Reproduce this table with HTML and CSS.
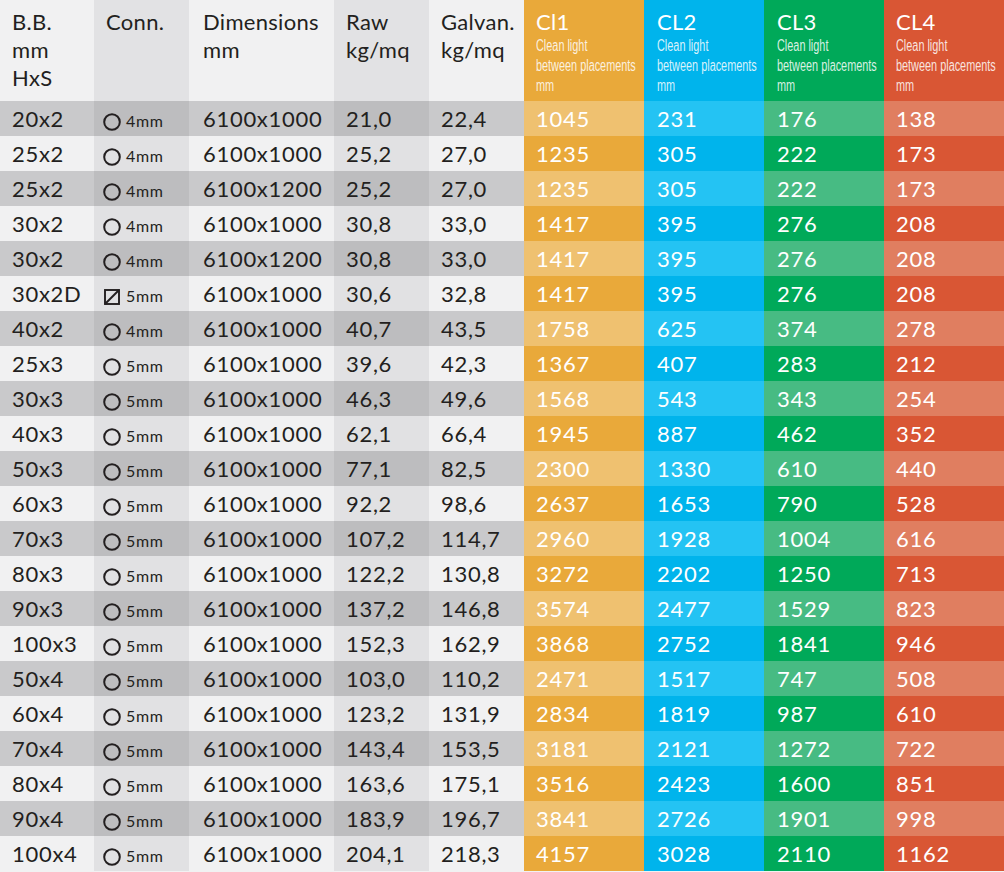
FILE: index.html
```html
<!DOCTYPE html>
<html lang="en">
<head>
<meta charset="utf-8">
<title>Grating table</title>
<link rel="stylesheet" href="styles.css">
</head>
<body>
<table class="grid">
  <colgroup>
    <col class="w-bb"><col class="w-conn"><col class="w-dim"><col class="w-raw"><col class="w-gal">
    <col class="w-cl"><col class="w-cl"><col class="w-cl"><col class="w-cl">
  </colgroup>
  <thead>
    <tr class="head">
      <th class="c-a">B.B.<br>mm<br>HxS</th>
      <th class="c-b">Conn.</th>
      <th class="c-a dim">Dimensions<br>mm</th>
      <th class="c-b">Raw<br>kg/mq</th>
      <th class="c-a">Galvan.<br>kg/mq</th>
      <th class="cl cl1"><span class="cl-title">Cl1</span><span class="cl-sub">Clean light<br>between placements<br>mm</span></th>
      <th class="cl cl2"><span class="cl-title">CL2</span><span class="cl-sub">Clean light<br>between placements<br>mm</span></th>
      <th class="cl cl3"><span class="cl-title">CL3</span><span class="cl-sub">Clean light<br>between placements<br>mm</span></th>
      <th class="cl cl4"><span class="cl-title">CL4</span><span class="cl-sub">Clean light<br>between placements<br>mm</span></th>
    </tr>
  </thead>
  <tbody id="rows"></tbody>
</table>
<script src="app.js"></script>
</body>
</html>
```

FILE: app.js
```js
const data = [
  ["20x2","o","4","6100x1000","21,0","22,4","1045","231","176","138"],
  ["25x2","o","4","6100x1000","25,2","27,0","1235","305","222","173"],
  ["25x2","o","4","6100x1200","25,2","27,0","1235","305","222","173"],
  ["30x2","o","4","6100x1000","30,8","33,0","1417","395","276","208"],
  ["30x2","o","4","6100x1200","30,8","33,0","1417","395","276","208"],
  ["30x2D","d","5","6100x1000","30,6","32,8","1417","395","276","208"],
  ["40x2","o","4","6100x1000","40,7","43,5","1758","625","374","278"],
  ["25x3","o","5","6100x1000","39,6","42,3","1367","407","283","212"],
  ["30x3","o","5","6100x1000","46,3","49,6","1568","543","343","254"],
  ["40x3","o","5","6100x1000","62,1","66,4","1945","887","462","352"],
  ["50x3","o","5","6100x1000","77,1","82,5","2300","1330","610","440"],
  ["60x3","o","5","6100x1000","92,2","98,6","2637","1653","790","528"],
  ["70x3","o","5","6100x1000","107,2","114,7","2960","1928","1004","616"],
  ["80x3","o","5","6100x1000","122,2","130,8","3272","2202","1250","713"],
  ["90x3","o","5","6100x1000","137,2","146,8","3574","2477","1529","823"],
  ["100x3","o","5","6100x1000","152,3","162,9","3868","2752","1841","946"],
  ["50x4","o","5","6100x1000","103,0","110,2","2471","1517","747","508"],
  ["60x4","o","5","6100x1000","123,2","131,9","2834","1819","987","610"],
  ["70x4","o","5","6100x1000","143,4","153,5","3181","2121","1272","722"],
  ["80x4","o","5","6100x1000","163,6","175,1","3516","2423","1600","851"],
  ["90x4","o","5","6100x1000","183,9","196,7","3841","2726","1901","998"],
  ["100x4","o","5","6100x1000","204,1","218,3","4157","3028","2110","1162"]
];
const circle = '<svg class="ico" viewBox="0 0 18 18" width="18" height="18"><circle cx="9" cy="9" r="7.8" fill="none" stroke="#231f20" stroke-width="2"/></svg>';
const square = '<svg class="ico" viewBox="0 0 18 18" width="18" height="18"><rect x="2" y="2" width="14" height="14" fill="none" stroke="#231f20" stroke-width="1.9"/><line x1="2" y1="16" x2="16" y2="2" stroke="#231f20" stroke-width="1.9"/></svg>';
const tbody = document.getElementById("rows");
tbody.innerHTML = data.map((r, i) => {
  const cls = i % 2 === 0 ? "odd" : "even";
  const icon = r[1] === "d" ? square : circle;
  return `<tr class="${cls}">
    <td class="c-a">${r[0]}</td>
    <td class="c-b conn">${icon}<span class="mm">${r[2]}mm</span></td>
    <td class="c-a dim">${r[3]}</td>
    <td class="c-b">${r[4]}</td>
    <td class="c-a">${r[5]}</td>
    <td class="cl cl1">${r[6]}</td>
    <td class="cl cl2">${r[7]}</td>
    <td class="cl cl3">${r[8]}</td>
    <td class="cl cl4">${r[9]}</td>
  </tr>`;
}).join("");
```

FILE: styles.css
```css
html, body {
  margin: 0;
  padding: 0;
  background: #f1f1f2;
}
body {
  font-family: Lato, "Liberation Sans", sans-serif;
  color: #231f20;
}
.grid {
  width: 1004px;
  table-layout: fixed;
  border-collapse: collapse;
  border-spacing: 0;
}
.w-bb { width: 94px; }
.w-conn { width: 95px; }
.w-dim { width: 145px; }
.w-raw { width: 95px; }
.w-gal { width: 95px; }
.w-cl { width: 120px; }

th, td {
  box-sizing: border-box;
  padding: 0 0 0 12px;
  text-align: left;
  white-space: nowrap;
  overflow: hidden;
}
.head { height: 101px; }
.head th {
  height: 101px;
  vertical-align: top;
  font-weight: 400;
  font-size: 22px;
  line-height: 28px;
  padding-top: 8px;
  letter-spacing: 0.3px;
}
.head th.c-a { background: #f1f1f2; }
.head th.c-b { background: #e2e2e4; }
.dim { padding-left: 14px; }

tbody tr { height: 35px; }
tbody td {
  height: 35px;
  font-size: 22px;
  line-height: 24px;
  vertical-align: middle;
  letter-spacing: 0.7px;
}
.odd .c-a { background: #c9c9cb; }
.odd .c-b { background: #bdbdbf; }
.even .c-a { background: #f1f1f2; }
.even .c-b { background: #e1e1e3; }

.conn { padding-left: 9px; padding-top: 2px; }
.ico {
  width: 18px;
  height: 18px;
  vertical-align: -4px;
  margin-right: 5px;
}
.mm {
  font-size: 16px;
  letter-spacing: 0.6px;
}

.cl { color: #ffffff; }
.cl1 { background: #e9a93a; }
.cl2 { background: #00b4ec; padding-left: 13px; }
.cl3 { background: #00a959; padding-left: 13px; }
.cl4 { background: #d95634; }
.odd .cl1 { background: #efc170; }
.odd .cl2 { background: #24c3f3; }
.odd .cl3 { background: #47bb83; }
.odd .cl4 { background: #e07e60; }

.cl-title {
  display: block;
  font-size: 22px;
  line-height: 28px;
}
.cl-sub {
  display: block;
  width: 150px;
  font-family: "Liberation Sans", sans-serif;
  font-size: 16px;
  line-height: 20px;
  letter-spacing: 0;
  color: rgba(255, 255, 255, 0.85);
  margin-top: 0;
  transform: scaleX(0.68);
  transform-origin: left top;
}
```
